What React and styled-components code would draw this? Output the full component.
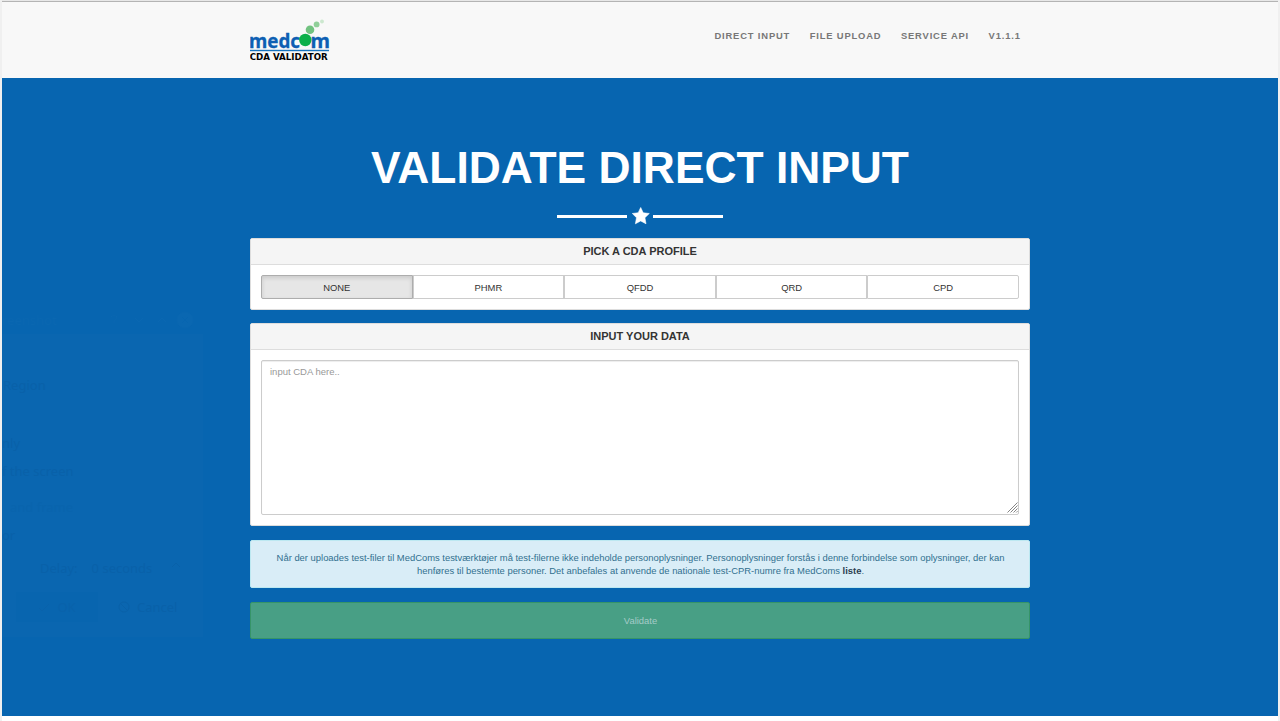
import React from 'react';
import styled, { createGlobalStyle, css } from 'styled-components';

const sans = '"Liberation Sans", Arial, sans-serif';

const GlobalStyle = createGlobalStyle`
  *, *::before, *::after { box-sizing: border-box; }
  html, body { margin: 0; height: 721px; overflow: hidden; background: #f0f0f0; }
  body { font-family: ${sans}; font-size: 9.41px; line-height: 13.33px; color: #333; }
`;

const Window = styled.div`
  position: relative;
  height: 721px;
  padding: 0 2px;
  display: flex;
  flex-direction: column;
`;

const Header = styled.header`
  height: 78px;
  border-top: 1px solid #e8e8e8;
  background: #f8f8f8;
  box-shadow: inset 0 1px 0 #b4b4b4;
  display: flex;
  justify-content: center;
  flex: none;
`;

const HeaderInner = styled.div`
  width: 780px;
  display: flex;
  justify-content: space-between;
  align-items: flex-start;
`;

const Logo = styled.svg`
  display: block;
  width: 84px;
  height: 46px;
  margin-top: 17px;
`;

const Nav = styled.nav`
  display: flex;
  gap: 19.5px;
  padding: 28px 9.3px 0 0;
`;

const NavLink = styled.a`
  color: #777;
  font-size: 9.4px;
  font-weight: 700;
  letter-spacing: 0.84px;
  line-height: 13.33px;
  text-transform: uppercase;
`;

const Main = styled.main`
  height: 638px;
  background: #0765b0;
  display: flex;
  flex-direction: column;
  align-items: center;
  flex: none;
`;

const Footer = styled.div`
  flex: 1;
  background: #fff;
`;

const Title = styled.h1`
  margin: 66px 0 0;
  font-size: 44.35px;
  line-height: 48px;
  font-weight: 700;
  color: #fff;
  white-space: nowrap;
`;

const Divider = styled.div`
  display: flex;
  align-items: center;
  justify-content: center;
  margin-top: 14px;
  height: 20px;
  color: #fff;
`;

const Rule = styled.span`
  width: 70px;
  height: 3px;
  background: #fff;
`;

const Star = styled.svg`
  width: 18px;
  height: 18px;
  margin: 0 3px 0 5px;
`;

const Content = styled.div`
  width: 780px;
  margin-top: 12px;
  display: flex;
  flex-direction: column;
`;

const Panel = styled.section`
  height: ${(p) => p.$height}px;
  margin-bottom: ${(p) => p.$gap}px;
  border: 1px solid #ddd;
  border-radius: 2px;
  background: #fff;
  display: flex;
  flex-direction: column;
`;

const PanelHeading = styled.h3`
  margin: 0;
  height: 26px;
  border-bottom: 1px solid #ddd;
  background: #f5f5f5;
  color: #333;
  font-size: 11px;
  font-weight: 700;
  line-height: 25px;
  text-align: center;
`;

const PanelBody = styled.div`
  position: relative;
  flex: 1;
  padding: 10px;
  display: flex;
`;

const Profile = styled.button`
  flex: 1;
  height: 24px;
  padding: 1px 0 0;
  border: 1px solid #ccc;
  background: #fff;
  color: #333;
  font: 9.42px/13px ${sans};
  &:first-child { border-radius: 2px 0 0 2px; }
  &:last-child { border-radius: 0 2px 2px 0; }
  ${(p) => p.$active && css`
    background: #e6e6e6;
    border-color: #adadad;
    box-shadow: inset 0 2px 4px rgba(0, 0, 0, 0.125);
  `}
`;

const Input = styled.textarea`
  flex: 1;
  height: 155px;
  margin: 0;
  padding: 4px 8px;
  border: 1px solid #ccc;
  border-radius: 2px;
  box-shadow: inset 0 1px 1px rgba(0, 0, 0, 0.075);
  font: 9.5px/13.33px ${sans};
  resize: none;
  &::placeholder { color: #999; opacity: 1; }
`;

const Grip = styled.svg`
  position: absolute;
  right: 11.5px;
  bottom: 12px;
  width: 11px;
  height: 11px;
`;

const Notice = styled.p`
  height: 48px;
  margin: 0 0 14px;
  padding: 10px 19px 0 20px;
  border: 1px solid #bce8f1;
  border-radius: 2px;
  background: #d9edf7;
  color: #31708f;
  text-align: center;
`;

const Strong = styled.b`
  color: #2c3e50;
`;

const Validate = styled.button`
  height: 37px;
  padding: 0 0 1px 1px;
  border: 1px solid #369468;
  border-radius: 2px;
  background: #489f85;
  color: #a5cbc8;
  font: 9.42px/13px ${sans};
`;

/* Fading dialog that overhangs the left edge of the window */
const Dialog = styled.aside`
  position: absolute;
  left: 2px;
  top: 306px;
  width: 201px;
  height: 331px;
  overflow: hidden;
  font: 13px/18px "Noto Sans", sans-serif;
`;

const DialogBar = styled.div`
  height: 28px;
  display: flex;
  align-items: center;
  justify-content: space-between;
  padding-right: 9px;
  color: #0a67b1;
`;

const DialogBody = styled.div`
  height: 303px;
  background: #0a66b0;
  display: flex;
  flex-direction: column;
  white-space: nowrap;
`;

const DialogLine = styled.div`
  height: 18px;
  margin: ${(p) => p.$top}px 0 0 ${(p) => p.$left || 0}px;
  color: ${(p) => (p.$faint ? '#0964ad' : '#0961a9')};
  display: flex;
  align-items: center;
  gap: ${(p) => p.$gap || 0}px;
`;

const BarIcons = styled.svg`
  width: 86px;
  height: 20px;
`;

const SmallIcon = styled.svg`
  width: 12px;
  height: 12px;
  margin-left: ${(p) => p.$left || 0}px;
`;

const DialogOk = styled.span`
  width: 82px;
  height: 30px;
  background: #0865af;
  color: #0962ab;
  display: flex;
  align-items: center;
  justify-content: center;
  gap: 7px;
`;

const profiles = ['NONE', 'PHMR', 'QFDD', 'QRD', 'CPD'];
const links = ['Direct input', 'File upload', 'Service API', 'v1.1.1'];

function MedcomLogo() {
  return (
    <Logo viewBox="0 0 84 46" aria-label="medcom CDA validator">
      <g fontFamily='"Noto Sans", sans-serif' fontWeight="700" fontSize="20" fill="#0d5fb3" stroke="#0d5fb3" strokeWidth="0.3">
        <text x="-1" y="29.6" textLength="51" lengthAdjust="spacingAndGlyphs">medc</text>
        <text x="60.5" y="29.6" textLength="19.5" lengthAdjust="spacingAndGlyphs">m</text>
      </g>
      <circle cx="55.3" cy="22" r="6.2" fill="#0cb04a" />
      <circle cx="60" cy="11.8" r="4.3" fill="#71c280" />
      <circle cx="66.6" cy="6.4" r="2.9" fill="#90cf99" />
      <circle cx="72" cy="3.5" r="1.9" fill="#cce8cf" />
      <rect x="0" y="31.8" width="79" height="1.4" fill="#1672bd" />
      <text x="-0.3" y="41.8" fontFamily='"DejaVu Sans Condensed", "DejaVu Sans", sans-serif' fontWeight="700" fontSize="9" textLength="78" lengthAdjust="spacingAndGlyphs">CDA VALIDATOR</text>
    </Logo>
  );
}

function FadingDialog() {
  return (
    <Dialog>
      <DialogBar>
        <span>reenshot</span>
        <BarIcons viewBox="0 0 86 20" fill="none" stroke="currentColor">
          <path d="M3 7q3-4 6 0q0 2-3 4v2M27 8l4 4 4-4M50 12l4-4 4 4" />
          <circle cx="77" cy="10" r="8" fill="currentColor" />
          <path d="M74 7l6 6M80 7l-6 6" stroke="#0765b0" />
        </BarIcons>
      </DialogBar>
      <DialogBody>
        <DialogLine $top={42} $left={1}>Region</DialogLine>
        <DialogLine $top={40}>nly</DialogLine>
        <DialogLine $top={10}>f the screen</DialogLine>
        <DialogLine $top={18} $left={8} $faint>and frame</DialogLine>
        <DialogLine $top={10}>or</DialogLine>
        <DialogLine $top={15} $left={38} $gap={14}>
          <span>Delay:</span>
          <span>0 seconds</span>
          <SmallIcon $left={4} viewBox="0 0 12 12" fill="none" stroke="currentColor"><path d="M2 5l4-4 4 4" /></SmallIcon>
        </DialogLine>
        <DialogLine $top={21} $left={14} $gap={20}>
          <DialogOk>
            <SmallIcon viewBox="0 0 12 12" fill="none" stroke="currentColor"><path d="M1 7l3 3 7-7" /></SmallIcon>
            OK
          </DialogOk>
          <DialogLine $top={0} $gap={7}>
            <SmallIcon viewBox="0 0 12 12" fill="none" stroke="currentColor">
              <circle cx="6" cy="6" r="5" />
              <path d="M2.5 2.5l7 7" />
            </SmallIcon>
            Cancel
          </DialogLine>
        </DialogLine>
      </DialogBody>
    </Dialog>
  );
}

export default function App() {
  return (
    <Window>
      <GlobalStyle />
      <Header>
        <HeaderInner>
          <MedcomLogo />
          <Nav>{links.map((l) => <NavLink key={l}>{l}</NavLink>)}</Nav>
        </HeaderInner>
      </Header>
      <Main>
        <Title>VALIDATE DIRECT INPUT</Title>
        <Divider>
          <Rule />
          <Star viewBox="0 0 18 18" fill="currentColor" stroke="currentColor" strokeWidth="0.6" strokeLinejoin="round">
            <path d="M8.7 .5L11.2 5.8L17.3 6.5L12.9 10.7L14 16.8L8.7 13.9L3.4 16.8L4.5 10.7L.3 6.5L6.2 5.8Z" />
          </Star>
          <Rule />
        </Divider>
        <Content>
          <Panel $height={72} $gap={13}>
            <PanelHeading>PICK A CDA PROFILE</PanelHeading>
            <PanelBody>
              {profiles.map((p, i) => <Profile key={p} $active={i === 0}>{p}</Profile>)}
            </PanelBody>
          </Panel>
          <Panel $height={203} $gap={14}>
            <PanelHeading>INPUT YOUR DATA</PanelHeading>
            <PanelBody>
              <Input placeholder="input CDA here.." />
              <Grip viewBox="0 0 11 11" fill="none" stroke="#777" strokeWidth="0.9">
                <path d="M0.5 10.5l10-10M3.5 10.5l7-7M6.5 10.5l4-4M9.2 10.5l1.3-1.3" />
              </Grip>
            </PanelBody>
          </Panel>
          <Notice>
            Når der uploades test-filer til MedComs testværktøjer må test-filerne ikke indeholde personoplysninger. Personoplysninger forstås i denne forbindelse som oplysninger, der kan henføres til bestemte personer. Det anbefales at anvende de nationale test-CPR-numre fra MedComs <Strong>liste</Strong>.
          </Notice>
          <Validate>Validate</Validate>
        </Content>
      </Main>
      <Footer />
      <FadingDialog />
    </Window>
  );
}
